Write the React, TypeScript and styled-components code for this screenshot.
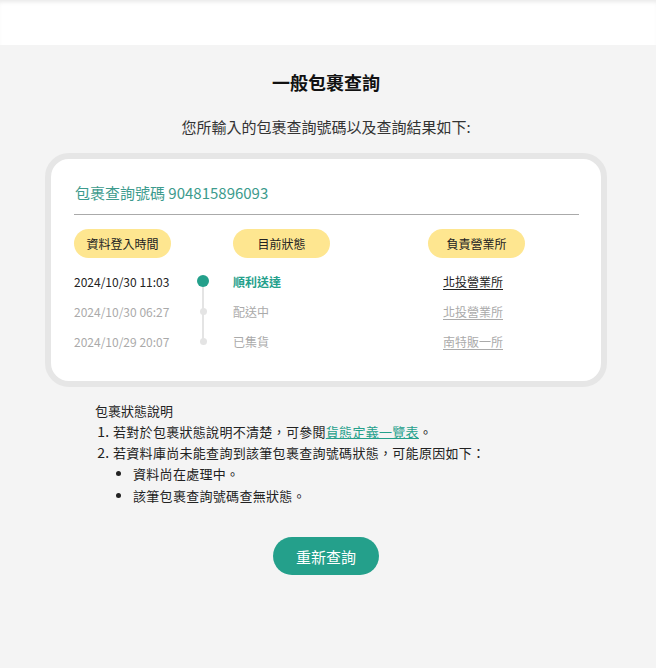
import React from "react";
import styled, { createGlobalStyle } from "styled-components";

const GlobalStyle = createGlobalStyle`
  html, body {
    margin: 0;
    padding: 0;
    background: #f4f4f4;
    font-family: "Noto Sans CJK TC", "Noto Sans", sans-serif;
    color: #222;
  }
  * { box-sizing: border-box; }
`;

const TEAL = "#24a08b";

const TopBar = styled.header`
  height: 45px;
  background: #fff;
  box-shadow: inset 0 4px 4px -2px rgba(0, 0, 0, 0.09);
`;

const Main = styled.main`
  background: #f4f4f4;
  min-height: 623px;
  padding: 24px 4px 40px 0;
  display: flex;
  flex-direction: column;
  align-items: center;
`;

const Title = styled.h1`
  margin: 0;
  font-size: 18px;
  line-height: 26px;
  font-weight: 700;
  color: #111;
`;

const Subtitle = styled.p`
  margin: 21px 0 0;
  font-size: 15px;
  line-height: 22px;
  color: #333;
`;

const Card = styled.section`
  margin-top: 15px;
  width: 562px;
  background: #fff;
  border: 6px solid #e6e6e6;
  border-radius: 24px;
  padding: 22px 22px 25px 23px;
`;

const TrackingNo = styled.div`
  font-size: 15px;
  line-height: 24px;
  color: #3d9b8d;
  padding: 0 1px 9px;
  border-bottom: 1px solid #aaa;
`;

const Grid = styled.div`
  display: grid;
  grid-template-columns: 117px 24px 213px 1fr;
  margin-top: 14px;
`;

const HeadCell = styled.div<{ $col: number; $indent?: number }>`
  grid-column: ${(p) => p.$col};
  padding-left: ${(p) => p.$indent ?? 0}px;
  margin-bottom: 8px;
`;

const Pill = styled.span`
  display: inline-flex;
  align-items: center;
  justify-content: center;
  width: 97px;
  height: 29px;
  border-radius: 15px;
  background: #fee690;
  font-size: 12px;
  color: #222;
`;

const Cell = styled.div<{ $active: boolean }>`
  height: 30px;
  display: flex;
  align-items: center;
  font-size: 12px;
  color: ${(p) => (p.$active ? "#222" : "#aaa")};
`;

const StatusCell = styled(Cell)`
  padding-left: 18px;
  color: ${(p) => (p.$active ? TEAL : "#aaa")};
  font-weight: ${(p) => (p.$active ? 600 : 400)};
`;

const OfficeCell = styled(Cell)`
  padding-left: 15px;
`;

const OfficeLink = styled.a<{ $active: boolean }>`
  color: ${(p) => (p.$active ? "#222" : "#aaa")};
  text-decoration: underline;
  text-underline-offset: 2px;
`;

const DotCell = styled.div<{ $first: boolean; $last: boolean }>`
  position: relative;
  height: 30px;
  display: flex;
  align-items: center;
  justify-content: center;

  &::before,
  &::after {
    content: "";
    position: absolute;
    left: 11px;
    width: 2px;
    background: #e4e4e4;
  }
  &::before {
    top: 0;
    height: 15px;
    display: ${(p) => (p.$first ? "none" : "block")};
  }
  &::after {
    bottom: 0;
    height: 15px;
    display: ${(p) => (p.$last ? "none" : "block")};
  }
`;

const Dot = styled.span<{ $active: boolean }>`
  position: relative;
  z-index: 1;
  width: ${(p) => (p.$active ? 12 : 7)}px;
  height: ${(p) => (p.$active ? 12 : 7)}px;
  border-radius: 50%;
  background: ${(p) => (p.$active ? TEAL : "#e4e4e4")};
`;

const Notes = styled.div`
  width: 562px;
  padding-left: 50px;
  margin-top: 13px;
  font-size: 13px;
  line-height: 21px;
  color: #222;
`;

const NotesTitle = styled.div``;

const Ordered = styled.ol`
  margin: 0;
  padding-left: 18px;
  letter-spacing: 0.3px;
  & > li::marker {
    font-size: 14px;
  }
`;

const Bullets = styled.ul`
  margin: 0;
  padding-left: 20px;
  list-style: disc;
  & > li {
    line-height: 21.5px;
  }
`;

const NoteLink = styled.a`
  color: ${TEAL};
  text-decoration: underline;
`;

const RetryButton = styled.button`
  margin-top: 31px;
  height: 38px;
  padding: 0 23px;
  border: none;
  border-radius: 19px;
  background: ${TEAL};
  color: #fff;
  font-family: inherit;
  font-size: 15px;
  cursor: pointer;
`;

const events = [
  { time: "2024/10/30 11:03", status: "順利送達", office: "北投營業所" },
  { time: "2024/10/30 06:27", status: "配送中", office: "北投營業所" },
  { time: "2024/10/29 20:07", status: "已集貨", office: "南特販一所" },
];

export default function App() {
  return (
    <>
      <GlobalStyle />
      <TopBar />
      <Main>
        <Title>一般包裹查詢</Title>
        <Subtitle>您所輸入的包裹查詢號碼以及查詢結果如下:</Subtitle>
        <Card>
          <TrackingNo>包裹查詢號碼 904815896093</TrackingNo>
          <Grid>
            <HeadCell $col={1}>
              <Pill>資料登入時間</Pill>
            </HeadCell>
            <HeadCell $col={3} $indent={18}>
              <Pill>目前狀態</Pill>
            </HeadCell>
            <HeadCell $col={4}>
              <Pill>負責營業所</Pill>
            </HeadCell>
            {events.map((e, i) => {
              const active = i === 0;
              return (
                <React.Fragment key={e.time}>
                  <Cell $active={active}>{e.time}</Cell>
                  <DotCell $first={i === 0} $last={i === events.length - 1}>
                    <Dot $active={active} />
                  </DotCell>
                  <StatusCell $active={active}>{e.status}</StatusCell>
                  <OfficeCell $active={active}>
                    <OfficeLink $active={active} href="#">
                      {e.office}
                    </OfficeLink>
                  </OfficeCell>
                </React.Fragment>
              );
            })}
          </Grid>
        </Card>
        <Notes>
          <NotesTitle>包裹狀態說明</NotesTitle>
          <Ordered>
            <li>
              若對於包裹狀態說明不清楚，可參閱
              <NoteLink href="#">貨態定義一覽表</NoteLink>。
            </li>
            <li>
              若資料庫尚未能查詢到該筆包裹查詢號碼狀態，可能原因如下：
              <Bullets>
                <li>資料尚在處理中。</li>
                <li>該筆包裹查詢號碼查無狀態。</li>
              </Bullets>
            </li>
          </Ordered>
        </Notes>
        <RetryButton>重新查詢</RetryButton>
      </Main>
    </>
  );
}
